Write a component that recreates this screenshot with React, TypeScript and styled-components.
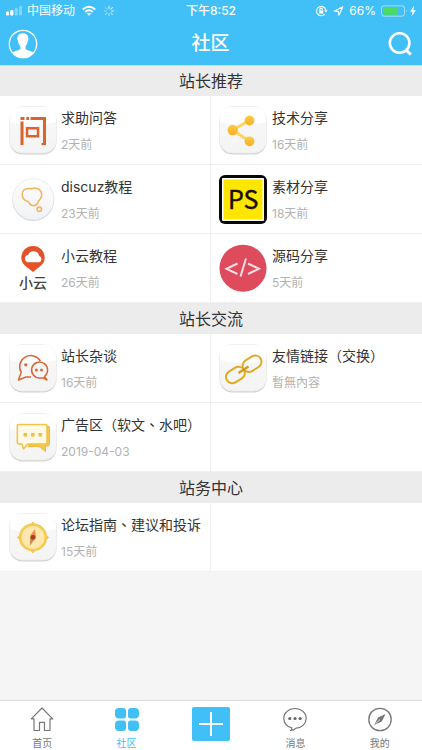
import React from "react";
import styled, { createGlobalStyle } from "styled-components";

const BLUE = "#41c0f7";

const GlobalStyle = createGlobalStyle`
  * { box-sizing: border-box; }
  body {
    margin: 0;
    background: #f5f5f5;
    font-family: Inter, "Noto Sans CJK SC", sans-serif;
    color: #333;
  }
  a { color: inherit; text-decoration: none; }
  svg { display: block; flex: none; }
`;

const Page = styled.div`
  min-height: 100vh;
  display: flex;
  flex-direction: column;
`;

const Header = styled.header`
  height: 65px;
  background: ${BLUE};
  color: #fff;
  box-shadow: 0 1px 0 #aee5fa;
  z-index: 1;
`;

const StatusBar = styled.div`
  display: grid;
  grid-template-columns: 1fr auto 1fr;
  align-items: center;
  height: 22px;
  padding: 0 5px;
  font-size: 12px;
  line-height: 16px;
`;

const StatusGroup = styled.div<{ $end?: boolean }>`
  display: flex;
  align-items: center;
  gap: ${(p) => (p.$end ? 5 : 7)}px;
  justify-content: ${(p) => (p.$end ? "flex-end" : "flex-start")};
`;

const Carrier = styled.div`
  display: flex;
  align-items: center;
  gap: 4px;
`;

const Clock = styled.time`
  font-weight: 500;
  font-size: 12px;
`;

const NavBar = styled.div`
  display: grid;
  grid-template-columns: 1fr auto 1fr;
  align-items: center;
  height: 43px;
  padding: 0 9px 0 8px;
`;

const IconButton = styled.button<{ $end?: boolean }>`
  padding: 0;
  border: 0;
  background: none;
  color: inherit;
  justify-self: ${(p) => (p.$end ? "end" : "start")};
`;

const Title = styled.h1`
  margin: 0;
  font-size: 19px;
  font-weight: 500;
  line-height: 24px;
`;

const SectionTitle = styled.h2`
  margin: 0;
  height: 31px;
  padding-top: 1px;
  background: #ececec;
  font-size: 16px;
  font-weight: 400;
  line-height: 31px;
  text-align: center;
`;

const BoardGrid = styled.div`
  display: grid;
  grid-template-columns: 1fr 1fr;
  background: #fff;
`;

const Board = styled.a`
  display: flex;
  gap: 4px;
  min-width: 0;
  height: 69px;
  padding: 10px 0 0 9px;
  border-bottom: 1px solid #f0f0f0;
  &:nth-child(odd) { border-right: 1px solid #f0f0f0; }
  &:nth-child(even) { padding-left: 8px; gap: 5px; }
`;

const EmptyBoard = styled.div`
  border-bottom: 1px solid #f0f0f0;
`;

const BoardText = styled.div`
  display: flex;
  flex-direction: column;
  gap: 9px;
  padding-top: 1px;
  white-space: nowrap;
`;

const BoardName = styled.span`
  font-size: 14px;
  line-height: 21px;
`;

const CenteredComma = styled.span`
  font-family: "Noto Sans CJK TC", sans-serif;
`;

const BoardDate = styled.span`
  color: #b2b2b2;
  font-size: 12px;
  line-height: 16px;
`;

const TabBar = styled.nav`
  position: sticky;
  bottom: 0;
  display: grid;
  grid-template-columns: repeat(5, 1fr);
  height: 50px;
  margin-top: auto;
  border-top: 1px solid #dcdcdc;
  background: #fff;
`;

const Tab = styled.a<{ $active?: boolean }>`
  display: flex;
  flex-direction: column;
  align-items: center;
  gap: 4px;
  padding-top: 6px;
  color: ${(p) => (p.$active ? BLUE : "#777")};
  font-size: 10px;
  line-height: 14px;
`;

const ComposeButton = styled.button`
  justify-self: center;
  display: grid;
  place-items: center;
  width: 38px;
  height: 34px;
  margin-top: 6px;
  padding: 0;
  border: 0;
  border-radius: 2px;
  background: ${BLUE};
`;

/* Status bar glyphs */

const SignalIcon = () => (
  <svg width="18" height="12" viewBox="0 0 18 12" fill="#fff">
    <rect x="1" y="6.500" width="3" height="4" rx="1" />
    <rect x="5.200" y="5" width="3.200" height="5.500" rx="1" />
    <rect x="9.800" y="3" width="3" height="7.500" rx="1" opacity=".35" />
    <rect x="14" y="1" width="3" height="9.500" rx="1" opacity=".35" />
  </svg>
);

const WifiIcon = () => (
  <svg width="14" height="12" viewBox="0 0 14 12" fill="none" stroke="#fff" strokeWidth="2">
    <path d="M.8 4.400Q7-1 13.200 4.400" />
    <path d="M3.200 7Q7 3.600 10.800 7" />
    <path d="M4.900 8.500Q7 6.900 9.100 8.500L7 10.800Z" fill="#fff" stroke="none" />
  </svg>
);

const SpinnerIcon = () => (
  <svg width="12" height="12" viewBox="0 0 12 12" stroke="#fff" strokeWidth="1" strokeLinecap="round">
    {[0, 45, 90, 135, 180, 225, 270, 315].map((a, i) => (
      <path key={a} d="M6 1.200V3.400" transform={`rotate(${a} 6 6)`} opacity={0.9 - i * 0.07} />
    ))}
  </svg>
);

const RotationLockIcon = () => (
  <svg width="13" height="12" viewBox="0 0 13 12" fill="none" stroke="#fff" strokeWidth="1.1">
    <path d="M9.800 9.200A4.700 4.700 0 1 1 10.900 5.400" />
    <path d="M9.200 5.200h3.400l-1.700 2.200z" fill="#fff" stroke="none" />
    <rect x="4" y="5.400" width="4.200" height="3.200" fill="#fff" stroke="none" />
    <path d="M4.900 5.600V4.300a1.200 1.200 0 0 1 2.400 0v1.300" />
  </svg>
);

const LocationIcon = () => (
  <svg width="11" height="12" viewBox="0 0 11 12" fill="none" stroke="#fff" strokeWidth="1.100" strokeLinejoin="round">
    <path d="M1.200 6.200L9.800 1.800L5.900 10.300L5.400 6.400Z" />
  </svg>
);

const BatteryIcon = () => (
  <svg width="36" height="12" viewBox="0 0 36 12">
    <rect x=".5" y=".8" width="23" height="10.400" rx="2.500" fill="none" stroke="#fff" strokeOpacity=".5" />
    <rect x="2" y="2.300" width="14.500" height="7.400" rx="1" fill="#4cd964" />
    <path d="M25 4.200q1.500 1.800 0 3.600z" fill="#fff" opacity=".5" />
    <path d="M33.200 0.800L29 6.700h2.700L30.400 11.400L35 5.200h-2.700z" fill="#fff" />
  </svg>
);

/* Header glyphs */

const AvatarIcon = () => (
  <svg width="30" height="30" viewBox="0 0 30 30">
    <circle cx="15" cy="15" r="13.700" fill="none" stroke="#fff" strokeWidth="1.300" />
    <path
      d="M14.700 4.200c-4 0-5.700 2.900-5.300 6.300.1.700.4 1.200.6 1.600.4 2.600 1.300 4.100 2.400 5.200v2.400c-.5 1.500-5.600 2-7.800 4A13.500 13.500 0 0 0 15 28.600a13.500 13.500 0 0 0 10.400-4.900c-2.200-2-7.300-2.500-7.900-4v-2.400c1.100-1.100 1.900-2.600 2.200-5.200.3-.4.600-.9.700-1.600.4-3.700-1.800-6.300-5.700-6.300z"
      fill="#fff"
    />
  </svg>
);

const SearchIcon = () => (
  <svg width="26" height="26" viewBox="0 0 26 26" fill="none" stroke="#fff" strokeWidth="2.600">
    <circle cx="12.600" cy="12" r="9.800" />
    <path d="M19 18.800L23.800 23.600" strokeWidth="3" />
  </svg>
);

/* Board icons, all drawn on a 48 unit square */

const BoardIcon = ({ children, tile }: { children: React.ReactNode; tile?: boolean }) => (
  <svg width="48" height="49" viewBox="0 0 48 49">
    {tile && (
      <>
        <defs>
          <linearGradient id="tileFill" x1="0" y1="0" x2="0" y2="1">
            <stop offset="0" stopColor="#fdfdfd" />
            <stop offset=".36" stopColor="#f7f7f7" />
            <stop offset="1" stopColor="#f4f4f4" />
          </linearGradient>
        </defs>
        <rect x=".5" y="1.700" width="47" height="46.800" rx="13" fill="#d2d2d2" />
        <rect x=".5" y=".5" width="47" height="46.500" rx="13" fill="url(#tileFill)" stroke="#ececec" strokeWidth=".8" />
        <path d="M1 16V13Q1 1 13 1H35Q47 1 47 13V16Q24 22 1 16Z" fill="#fff" />
      </>
    )}
    {children}
  </svg>
);

const QuestionBoardIcon = () => (
  <BoardIcon tile>
    <g fill="#dc642c">
      <path d="M11.500 11h4v3h-4zM17.300 11h2.700v3h-2.700zM21.500 11H37v28h-4.500v-2H34V14H21.500zM11.500 15.500h3V39h-3z" />
      <path d="M16.800 21h13.500v10.500H16.800zM19.300 23.500v5.500h8.500v-5.500z" fillRule="evenodd" />
    </g>
  </BoardIcon>
);

const ShareBoardIcon = () => (
  <BoardIcon tile>
    <defs>
      <linearGradient id="shareFill" x1="0" y1="0" x2="0" y2="1">
        <stop offset="0" stopColor="#ffcc45" />
        <stop offset="1" stopColor="#faae26" />
      </linearGradient>
    </defs>
    <path d="M30.500 14.500L13.500 24L30.500 35.300" fill="none" stroke="#ffd35f" strokeWidth="3" />
    <circle cx="30.500" cy="14.500" r="4.900" fill="url(#shareFill)" />
    <circle cx="13.700" cy="24" r="5.200" fill="url(#shareFill)" />
    <circle cx="30.500" cy="35.300" r="4.900" fill="url(#shareFill)" />
  </BoardIcon>
);

const BubbleBoardIcon = () => (
  <BoardIcon>
    <defs>
      <linearGradient id="discFill" x1="0" y1="0" x2="0" y2="1">
        <stop offset="0" stopColor="#fff" />
        <stop offset="1" stopColor="#f1f2f5" />
      </linearGradient>
    </defs>
    <circle cx="24.300" cy="25" r="21" fill="#d3d6df" />
    <circle cx="24.300" cy="24.200" r="20.600" fill="url(#discFill)" stroke="#e8e8ee" strokeWidth=".7" />
    <g fill="none" stroke="#f6b35d" strokeWidth="1.600">
      <path d="M20 13.500C15.500 13 12.400 16.300 13.200 20.300C13.900 24 16.600 25.800 18.800 26.400C20 27 20.500 30.800 24.700 30.800C28.700 30.800 28.500 27.200 30.100 25.500C32 23.500 33.400 20.600 32.400 17.600C31 13.600 26.500 12.300 23.300 13.400C22 13.800 21.400 13.700 20 13.500Z" />
      <circle cx="30.300" cy="34.300" r="2.200" />
    </g>
  </BoardIcon>
);

const PsBoardIcon = () => (
  <BoardIcon>
    <rect x="0" y="0" width="48" height="49" rx="6" fill="#080808" />
    <rect x="3" y="3" width="42" height="43" rx="1" fill="#fff" />
    <rect x="4.500" y="4.500" width="39" height="40" fill="#ffe600" />
    <text x="24.300" y="33.500" textAnchor="middle" fontFamily="Noto Sans CJK SC, sans-serif" fontSize="25" fontWeight="400" fill="#171000" stroke="#171000" strokeWidth=".4">
      PS
    </text>
  </BoardIcon>
);

const CloudBoardIcon = () => (
  <BoardIcon>
    <path d="M24 2a11.600 11.600 0 0 1 11.700 11.600c0 5-3.300 8.400-6.700 10.300L24 28l-5-4.100c-3.400-1.900-6.700-5.300-6.700-10.300A11.600 11.600 0 0 1 24 2z" fill="#e5522a" />
    <path d="M18.500 18.300h11a3.300 3.300 0 0 0 .7-6.400a5.800 5.800 0 0 0-11.100-.8a3.700 3.700 0 0 0-.6 7.200z" fill="#fff" />
    <text x="24" y="44" textAnchor="middle" fontFamily="Noto Sans CJK SC, sans-serif" fontSize="14" fontWeight="500" fill="#444">
      小云
    </text>
  </BoardIcon>
);

const CodeBoardIcon = () => (
  <BoardIcon>
    <circle cx="24" cy="24.200" r="23.500" fill="#de4b5d" />
    <path d="M18.500 19.500L7.500 24.800L18.500 30M29 19.500L40 24.800L29 30M27 14.500L21.500 32.500" fill="none" stroke="#fbdfe3" strokeWidth="2" />
  </BoardIcon>
);

const ChatBoardIcon = () => (
  <BoardIcon tile>
    <g fill="none" stroke="#d8683b" strokeWidth="1.500" strokeLinejoin="round">
      <path d="M31.500 17A11 10.800 0 1 0 12.200 28.200L9.500 36L17 33H22" />
      <path d="M35.500 32.300A8 8 0 1 0 31 34H34.500L38 36Z" />
    </g>
    <g fill="#d8683b">
      <circle cx="16.800" cy="20.800" r="1.600" />
      <circle cx="27.300" cy="26" r="1.500" />
      <circle cx="32.500" cy="26" r="1.500" />
    </g>
  </BoardIcon>
);

const MessagesBoardIcon = () => (
  <BoardIcon tile>
    <path d="M38 13.500h2.500v17.500q0 2-2 2H36.500v5.500L30 33.500H19l2-3h17z" fill="#f3c74b" stroke="#efbd3c" strokeWidth="1" strokeLinejoin="round" />
    <path d="M10 11.500H36Q38 11.500 38 13.500V29Q38 31 36 31H18.500L14.500 36L13 31H10Q8.300 31 8.300 29V13.500Q8.300 11.500 10 11.500Z" fill="#fff9e6" stroke="#f0c34a" strokeWidth="1.500" strokeLinejoin="round" />
    <path d="M14.500 20h3.600v3.600h-3.600zM22 20h3.600v3.600H22zM29.500 20h3.600v3.600h-3.600z" fill="#edc044" />
  </BoardIcon>
);

const LinkBoardIcon = () => (
  <BoardIcon tile>
    <g fill="none" stroke="#e0aa25" strokeWidth="2">
      <rect x="6.500" y="25" width="20" height="12.500" rx="6.200" transform="rotate(-32 16 31.300)" />
      <rect x="23" y="13.200" width="20" height="12.500" rx="6.200" transform="rotate(-32 33.500 19.500)" />
      <path d="M19.500 29L29.500 22.500" stroke="#cf9923" strokeWidth="2.200" />
    </g>
  </BoardIcon>
);

const CompassBoardIcon = () => (
  <BoardIcon tile>
    <path d="M24 8.500l3.500 4h-7zM24 40.200l3.500-4h-7zM8 24.400l4-3.500v7zM40 24.400l-4-3.500v7z" fill="#f1bd3d" />
    <circle cx="24" cy="24.400" r="12.800" fill="#ffe7ad" stroke="#f4cb50" strokeWidth="2.600" />
    <path d="M26 16.300L27 24.800L21.200 22.500Z" fill="#f08a4f" />
    <path d="M21 32.500L21.200 22.500L27 24.800Z" fill="#ca8f50" />
    <circle cx="24" cy="24.300" r="2.400" fill="#a63f24" />
  </BoardIcon>
);

/* Tab bar glyphs */

const HomeIcon = () => (
  <svg width="24" height="25" viewBox="0 0 24 25" fill="none" stroke="#777" strokeWidth="1.200" strokeLinejoin="round">
    <path d="M4 11.800H1.300L12 1L22.700 11.800H20V23.500H14.500V15.300H9.500V23.500H4Z" />
  </svg>
);

const CommunityIcon = () => (
  <svg width="24" height="25" viewBox="0 0 24 25" fill={BLUE}>
    <path d="M4 1h4q3 0 3 3v5q0 2.500-2.500 2.500H4Q0 11.500 0 7.500V5Q0 1 4 1z" />
    <path d="M20 1h-4q-3 0-3 3v5q0 2.500 2.500 2.500H20q4 0 4-4V5q0-4-4-4z" />
    <path d="M4 24h4q3 0 3-3v-5q0-2.500-2.500-2.500H4q-4 0-4 4V20q0 4 4 4z" />
    <path d="M20 24h-4q-3 0-3-3v-5q0-2.500 2.500-2.500H20q4 0 4 4V20q0 4-4 4z" />
  </svg>
);

const PlusIcon = () => (
  <svg width="26" height="26" viewBox="0 0 26 26" stroke="#fff" strokeWidth="2">
    <path d="M13 1V25M1 13H25" />
  </svg>
);

const MessageIcon = () => (
  <svg width="24" height="25" viewBox="0 0 24 25" fill="none" stroke="#777" strokeWidth="1.200" strokeLinejoin="round">
    <path d="M12 1.500C5.700 1.500.8 5.800.8 11.300C.8 16.300 4.500 19.700 8.800 20.800Q9.200 22.500 7.500 23.500Q11 23.500 13 21.200C19 20.800 23.200 16.600 23.200 11.300C23.200 5.800 18.300 1.500 12 1.500Z" />
    <g fill="#666" stroke="none">
      <circle cx="6.800" cy="11.500" r="1.600" />
      <circle cx="12" cy="11.500" r="1.600" />
      <circle cx="17.200" cy="11.500" r="1.600" />
    </g>
  </svg>
);

const MineIcon = () => (
  <svg width="24" height="25" viewBox="0 0 24 25" fill="none" stroke="#777" strokeWidth="1.300">
    <circle cx="12" cy="12.500" r="11.200" />
    <path d="M17.500 7L13.800 14.500L6.300 18L10 10.500Z" fill="#777" stroke="none" />
    <path d="M7.800 16.500L12 12.500" stroke="#fff" strokeWidth=".8" />
  </svg>
);

type BoardData = { name: string; date: string; icon: React.ReactNode };

const sections: { title: string; boards: BoardData[] }[] = [
  {
    title: "站长推荐",
    boards: [
      { name: "求助问答", date: "2天前", icon: <QuestionBoardIcon /> },
      { name: "技术分享", date: "16天前", icon: <ShareBoardIcon /> },
      { name: "discuz教程", date: "23天前", icon: <BubbleBoardIcon /> },
      { name: "素材分享", date: "18天前", icon: <PsBoardIcon /> },
      { name: "小云教程", date: "26天前", icon: <CloudBoardIcon /> },
      { name: "源码分享", date: "5天前", icon: <CodeBoardIcon /> },
    ],
  },
  {
    title: "站长交流",
    boards: [
      { name: "站长杂谈", date: "16天前", icon: <ChatBoardIcon /> },
      { name: "友情链接（交换）", date: "暫無內容", icon: <LinkBoardIcon /> },
      { name: "广告区（软文、水吧）", date: "2019-04-03", icon: <MessagesBoardIcon /> },
    ],
  },
  {
    title: "站务中心",
    boards: [{ name: "论坛指南、建议和投诉", date: "15天前", icon: <CompassBoardIcon /> }],
  },
];

const renderName = (name: string) =>
  name.split("、").map((part, i) => (
    <React.Fragment key={i}>
      {i > 0 && <CenteredComma>、</CenteredComma>}
      {part}
    </React.Fragment>
  ));

export default function App() {
  return (
    <Page>
      <GlobalStyle />
      <Header>
        <StatusBar>
          <StatusGroup>
            <Carrier>
              <SignalIcon />
              <span>中国移动</span>
            </Carrier>
            <WifiIcon />
            <SpinnerIcon />
          </StatusGroup>
          <Clock>下午8:52</Clock>
          <StatusGroup $end>
            <RotationLockIcon />
            <LocationIcon />
            <span>66%</span>
            <BatteryIcon />
          </StatusGroup>
        </StatusBar>
        <NavBar>
          <IconButton aria-label="个人资料">
            <AvatarIcon />
          </IconButton>
          <Title>社区</Title>
          <IconButton $end aria-label="搜索">
            <SearchIcon />
          </IconButton>
        </NavBar>
      </Header>
      <main>
        {sections.map((section) => (
          <section key={section.title}>
            <SectionTitle>{section.title}</SectionTitle>
            <BoardGrid>
              {section.boards.map((board) => (
                <Board key={board.name} href="#">
                  {board.icon}
                  <BoardText>
                    <BoardName>{renderName(board.name)}</BoardName>
                    <BoardDate>{board.date}</BoardDate>
                  </BoardText>
                </Board>
              ))}
              {section.boards.length % 2 === 1 && <EmptyBoard />}
            </BoardGrid>
          </section>
        ))}
      </main>
      <TabBar>
        <Tab href="#">
          <HomeIcon />
          首页
        </Tab>
        <Tab href="#" $active>
          <CommunityIcon />
          社区
        </Tab>
        <ComposeButton aria-label="发布">
          <PlusIcon />
        </ComposeButton>
        <Tab href="#">
          <MessageIcon />
          消息
        </Tab>
        <Tab href="#">
          <MineIcon />
          我的
        </Tab>
      </TabBar>
    </Page>
  );
}
